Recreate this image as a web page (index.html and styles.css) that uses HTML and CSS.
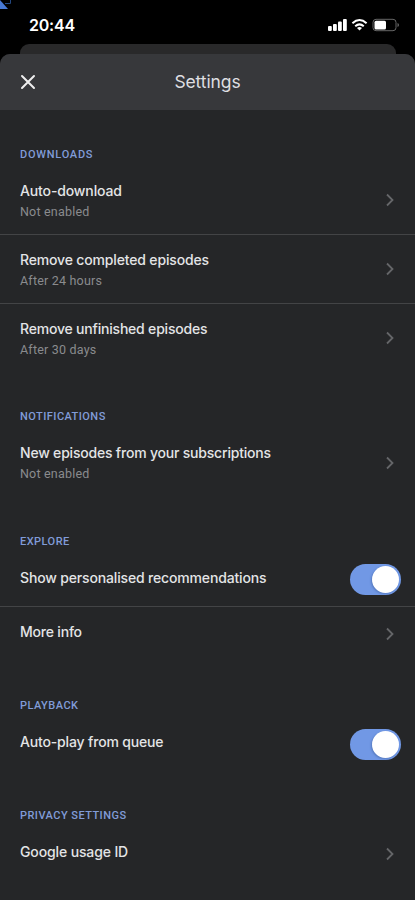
FILE: index.html
```html
<!DOCTYPE html>
<html lang="en">
<head>
<meta charset="utf-8">
<title>Settings</title>
<link rel="stylesheet" href="styles.css">
</head>
<body>
<svg class="defs" width="0" height="0"><symbol id="chevron" viewBox="0 0 10 14"><path d="M2 1.500 7.500 7 2 12.500" fill="none" stroke="currentColor" stroke-width="1.800"/></symbol></svg>
<svg class="corner" viewBox="0 0 12 10"><path d="M0 0 8 9H0Z" fill="#4778d4"/><path d="M5 3.500h5.500V0" fill="none" stroke="#23477f" stroke-width="1"/></svg>
<div class="status">
  <time>20:44</time>
  <svg class="indicators" width="74" height="18" viewBox="0 0 74 18">
    <g fill="#fff"><rect x="0" y="10" width="3.800" height="5" rx="1"/><rect x="5" y="8" width="3.800" height="7" rx="1"/><rect x="10" y="5.500" width="3.800" height="9.500" rx="1"/><rect x="15" y="3" width="3.800" height="12" rx="1"/></g>
    <g fill="none" stroke="#fff" stroke-width="2"><path d="M24.400 7.200Q31.500.900 38.600 7.200"/><path d="M27.200 10.200Q31.500 6.500 35.800 10.200"/></g>
    <path d="M29 12Q31.500 10.200 34 12L31.500 14.600Z" fill="#fff"/>
    <rect x="45" y="3.300" width="23" height="11.400" rx="3" fill="none" stroke="#666"/>
    <rect x="46.500" y="4.800" width="11.500" height="8.600" rx="1.500" fill="#fff"/>
    <path d="M69.500 7v4Q71 10.300 71 9T69.500 7Z" fill="#666"/>
  </svg>
</div>
<div class="behind"></div>
<main class="sheet">
  <header>
    <svg class="close" width="16" height="16" viewBox="0 0 16 16"><path d="M2 2 14 14M14 2 2 14" stroke="#eee" stroke-width="2" stroke-linecap="round"/></svg>
    <h1>Settings</h1>
  </header>
  <section>
    <h2 class="downloads">DOWNLOADS</h2>
    <div class="row tall line"><div><h3 class="snug">Auto-download</h3><p>Not enabled</p></div><svg class="chevron"><use href="#chevron"/></svg></div>
    <div class="row tall line"><div><h3>Remove completed episodes</h3><p>After 24 hours</p></div><svg class="chevron"><use href="#chevron"/></svg></div>
    <div class="row tall last"><div><h3 class="tight">Remove unfinished episodes</h3><p>After 30 days</p></div><svg class="chevron"><use href="#chevron"/></svg></div>
  </section>
  <section>
    <h2>NOTIFICATIONS</h2>
    <div class="row tall"><div><h3 class="tight">New episodes from your subscriptions</h3><p>Not enabled</p></div><svg class="chevron"><use href="#chevron"/></svg></div>
  </section>
  <section>
    <h2>EXPLORE</h2>
    <div class="row line"><h3>Show personalised recommendations</h3><span class="switch"><i></i></span></div>
    <div class="row"><h3 class="tight">More info</h3><svg class="chevron"><use href="#chevron"/></svg></div>
  </section>
  <section>
    <h2>PLAYBACK</h2>
    <div class="row"><h3>Auto-play from queue</h3><span class="switch"><i></i></span></div>
  </section>
  <section>
    <h2>PRIVACY SETTINGS</h2>
    <div class="row"><h3 class="snug">Google usage ID</h3><svg class="chevron"><use href="#chevron"/></svg></div>
  </section>
</main>
</body>
</html>
```
FILE: styles.css
```css
* { box-sizing: border-box; }
body { margin: 0; height: 900px; overflow: hidden; display: flex; flex-direction: column; background: #000; color: #e3e4e6; font-family: Inter, "Liberation Sans", sans-serif; }
h1, h2, h3, p { margin: 0; }
.defs { position: absolute; }
.corner { position: absolute; left: 0; top: 0; width: 12px; height: 10px; }
.status { height: 44px; flex: none; display: flex; justify-content: space-between; padding: 16px 13px 0 29px; }
time { font-size: 16px; line-height: 19px; font-weight: 600; letter-spacing: -.2px; color: #fff; }
.behind { height: 10px; flex: none; margin: 0 19px 0 20px; background: #29292a; border-radius: 9px 9px 0 0; }
.sheet { flex: 1; background: #252628; border-radius: 10px 10px 0 0; overflow: hidden; }
header { height: 56px; display: grid; grid-template-columns: 40px 1fr 40px; align-items: center; background: #37383b; }
.close { margin-left: 20px; }
h1 { font: 400 17.500px/24px Inter, sans-serif; letter-spacing: -.1px; text-align: center; color: #dedfe1; }
h2 { height: 56px; padding: 36px 20px 0; font: 500 11px/18px Roboto, sans-serif; letter-spacing: .46px; color: #819cd8; }
.downloads { letter-spacing: .76px; }
.row { height: 54px; padding: 0 14px 0 20px; display: flex; justify-content: space-between; align-items: center; }
.row.tall { height: 69px; }
.row.last { height: 68px; }
.line { border-bottom: 1px solid #434446; }
h3 { font-size: 14px; line-height: 20px; font-weight: 500; letter-spacing: -.16px; white-space: nowrap; margin-top: -4px; }
h3.snug { letter-spacing: -.13px; }
h3.tight { letter-spacing: -.2px; }
.tall h3 { margin-top: 1px; }
p { font: 400 12.500px/18px Roboto, sans-serif; letter-spacing: .2px; color: #8a8b8e; margin-top: 2px; }
.chevron { width: 10px; height: 14px; margin-right: 6px; color: #656669; flex: none; }
.switch { width: 51px; height: 31px; border-radius: 16px; background: #7198e5; padding: 2px; display: flex; justify-content: flex-end; }
.switch i { width: 27px; height: 27px; border-radius: 50%; background: #fff; box-shadow: -1px 1px 2px #4669aa99; }
```
